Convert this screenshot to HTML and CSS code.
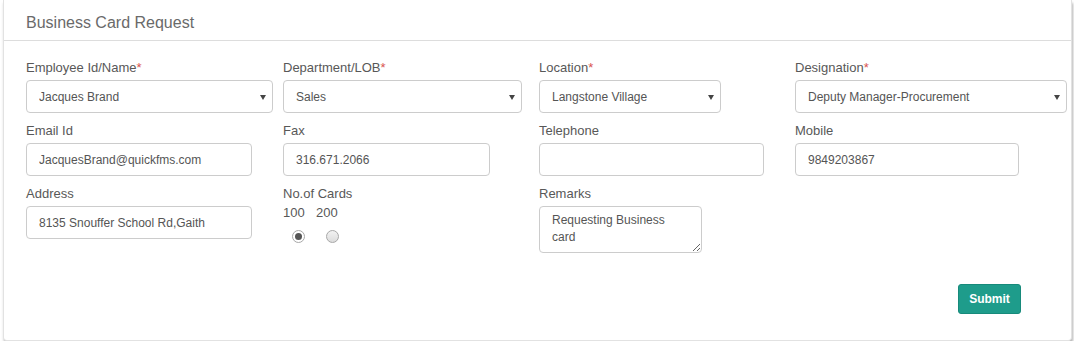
FILE: index.html
```html
<!DOCTYPE html>
<html>
  <head>
    <meta charset="utf-8" />
    <link rel="stylesheet" href="styles.css">
  </head>

  <body class="bc-body">
    <div class="bc-card">
      <div class="bc-card-header">Business Card Request</div>

      <form class="bc-form">
        <div class="bc-field">
          <label class="bc-label">Employee Id/Name<span class="bc-required">*</span></label>
          <span class="bc-select-wrap">
            <select class="bc-control bc-w-247"><option>Jacques Brand</option></select>
          </span>
        </div>

        <div class="bc-field">
          <label class="bc-label">Department/LOB<span class="bc-required">*</span></label>
          <span class="bc-select-wrap">
            <select class="bc-control bc-w-239"><option>Sales</option></select>
          </span>
        </div>

        <div class="bc-field">
          <label class="bc-label">Location<span class="bc-required">*</span></label>
          <span class="bc-select-wrap">
            <select class="bc-control bc-w-182"><option>Langstone Village</option></select>
          </span>
        </div>

        <div class="bc-field">
          <label class="bc-label">Designation<span class="bc-required">*</span></label>
          <span class="bc-select-wrap">
            <select class="bc-control bc-w-272"><option>Deputy Manager-Procurement</option></select>
          </span>
        </div>

        <div class="bc-field">
          <label class="bc-label">Email Id</label>
          <input class="bc-control bc-w-226" type="text" value="JacquesBrand@quickfms.com" />
        </div>

        <div class="bc-field">
          <label class="bc-label">Fax</label>
          <input class="bc-control bc-w-207" type="text" value="316.671.2066" />
        </div>

        <div class="bc-field">
          <label class="bc-label">Telephone</label>
          <input class="bc-control bc-w-225" type="text" value="" />
        </div>

        <div class="bc-field">
          <label class="bc-label">Mobile</label>
          <input class="bc-control bc-w-224" type="text" value="9849203867" />
        </div>

        <div class="bc-field">
          <label class="bc-label">Address</label>
          <input class="bc-control bc-w-226" type="text" value="8135 Snouffer School Rd,Gaith" />
        </div>

        <div class="bc-field">
          <label class="bc-label">No.of Cards</label>
          <div class="bc-radio-group">
            <label class="bc-radio-option bc-radio-first">
              <span>100</span>
              <input class="bc-radio" type="radio" name="cards" checked />
            </label>
            <label class="bc-radio-option">
              <span>200</span>
              <input class="bc-radio" type="radio" name="cards" />
            </label>
          </div>
        </div>

        <div class="bc-field">
          <label class="bc-label">Remarks</label>
          <textarea class="bc-control bc-textarea">Requesting Business card</textarea>
        </div>

        <div class="bc-field"></div>

        <div class="bc-actions">
          <button class="bc-button" type="button">Submit</button>
        </div>
      </form>
    </div>
  </body>
</html>
```

FILE: styles.css
```css
:root {
  --font: "Liberation Sans", Arial, Helvetica, sans-serif;
  --label: #585858;
  --border: #cccccc;
  --teal: #1e9c8b;
}

body {
  font-family: var(--font);
}

.bc-body {
  margin: 0;
  background: #ffffff;
}

.bc-card {
  margin: 0 2px 0 3px;
  background: #ffffff;
  border: 1px solid #e2e2e2;
  border-top: 0;
  border-radius: 0 0 4px 4px;
  box-shadow: 1px 3px 3px rgba(0, 0, 0, 0.3);
  padding-bottom: 26px;
}

.bc-card-header {
  padding: 13px 22px 7px;
  font-size: 16px;
  line-height: 20px;
  color: #6a6a6a;
  border-bottom: 1px solid #dddddd;
}

.bc-form {
  display: grid;
  grid-template-columns: 257px 256px 256px 1fr;
  row-gap: 9px;
  padding: 18px 3px 0 22px;
  margin: 0;
}

.bc-field {
  display: flex;
  flex-direction: column;
  align-items: flex-start;
}

.bc-label {
  display: block;
  font-size: 13px;
  line-height: 18px;
  color: var(--label);
  margin-bottom: 3px;
}

.bc-required {
  color: #d9534f;
}

.bc-control {
  box-sizing: border-box;
  height: 33px;
  margin: 0;
  padding: 0 12px;
  font-family: var(--font);
  font-size: 12px;
  color: #555555;
  background: #ffffff;
  border: 1px solid var(--border);
  border-radius: 4px;
  outline: 0;
}

.bc-select-wrap {
  position: relative;
  display: inline-block;
}

.bc-select-wrap > select {
  -webkit-appearance: none;
  appearance: none;
  display: block;
}

.bc-select-wrap::after {
  content: "";
  position: absolute;
  right: 7px;
  top: 15px;
  border-left: 3px solid transparent;
  border-right: 3px solid transparent;
  border-top: 5px solid #444444;
}

.bc-w-247 { width: 247px; }
.bc-w-239 { width: 239px; }
.bc-w-182 { width: 182px; }
.bc-w-272 { width: 272px; }
.bc-w-226 { width: 226px; }
.bc-w-207 { width: 207px; }
.bc-w-225 { width: 225px; }
.bc-w-224 { width: 224px; }

.bc-textarea {
  width: 163px;
  height: 47px;
  padding: 5px 12px;
  line-height: 17px;
  resize: both;
}

.bc-radio-group {
  display: flex;
  margin-top: -2px;
}

.bc-radio-option {
  display: flex;
  flex-direction: column;
  font-size: 13px;
  line-height: 18px;
  color: var(--label);
  width: 33px;
}

.bc-radio {
  -webkit-appearance: none;
  appearance: none;
  box-sizing: border-box;
  width: 13px;
  height: 13px;
  margin: 8px 0 0 10px;
  border: 1px solid #a8a8a8;
  border-radius: 50%;
  background: linear-gradient(#f2f2f2, #dcdcdc);
  position: relative;
}

.bc-radio-first .bc-radio {
  margin-left: 9px;
  background: #ffffff;
}

.bc-radio:checked::after {
  content: "";
  position: absolute;
  left: 2px;
  top: 2px;
  width: 7px;
  height: 7px;
  border-radius: 50%;
  background: #555555;
}

.bc-actions {
  grid-column: 4;
  width: 226px;
  display: flex;
  justify-content: flex-end;
  margin-top: 22px;
}

.bc-button {
  width: 63px;
  height: 30px;
  font-family: var(--font);
  font-size: 12px;
  font-weight: bold;
  color: #ffffff;
  background: var(--teal);
  border: 1px solid #178a7b;
  border-radius: 3px;
  cursor: pointer;
}
```
